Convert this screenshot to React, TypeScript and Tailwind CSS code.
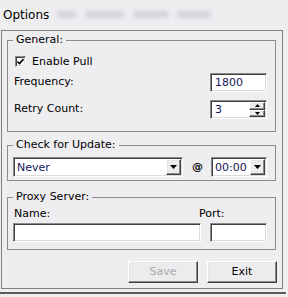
import { useState } from 'react'

const sunken =
  'border border-t-[#8a8a8a] border-l-[#8a8a8a] border-b-white border-r-white shadow-[inset_1px_1px_0_#404040,inset_-1px_-1px_0_#dcdcdc] bg-white'
const raised =
  'border border-t-white border-l-white border-b-[#404040] border-r-[#404040] shadow-[inset_-1px_-1px_0_#8a8a8a,inset_1px_1px_0_#e6e6e6] bg-[#ecebee]'

function DownArrow({ w = 7 }: { w?: number }) {
  const h = Math.ceil(w / 2)
  return (
    <svg width={w} height={h} viewBox={`0 0 ${w} ${h}`}>
      <polygon points={`0,0 ${w},0 ${w / 2},${h}`} fill="#000" />
    </svg>
  )
}

function UpArrow({ w = 5 }: { w?: number }) {
  const h = Math.ceil(w / 2)
  return (
    <svg width={w} height={h} viewBox={`0 0 ${w} ${h}`}>
      <polygon points={`0,${h} ${w},${h} ${w / 2},0`} fill="#000" />
    </svg>
  )
}

function Combo({ value, className }: { value: string; className: string }) {
  return (
    <div className={`${sunken} ${className} h-[20px] flex items-stretch p-[1px]`}>
      <span className="flex-1 min-w-0 overflow-hidden whitespace-nowrap pl-[2px] flex items-center text-[#14145a] leading-none">
        {value}
      </span>
      <button type="button" className={`${raised} w-[15px] shrink-0 flex items-center justify-center`}>
        <DownArrow />
      </button>
    </div>
  )
}

export default function App() {
  const [pull, setPull] = useState(true)

  return (
    <div className="w-[288px] h-[297px] bg-[#eeedf0] font-['DejaVu_Sans',sans-serif] text-[11px] text-black overflow-hidden">
      <div className="h-[30px] flex items-start pl-[3px] pt-[8px]">
        <span className="text-[12px] leading-[14px]">Options</span>
        {/* blurred window caption */}
        <div className="ml-[8px] flex gap-[8px] mt-[3px] blur-[2px]">
          <div className="w-[20px] h-[7px] rounded bg-[#d2d3dc]" />
          <div className="w-[40px] h-[7px] rounded bg-[#d2d3dc]" />
          <div className="w-[36px] h-[7px] rounded bg-[#d2d3dc]" />
          <div className="w-[34px] h-[7px] rounded bg-[#d2d3dc]" />
        </div>
      </div>

      <div className="ml-[1px] w-[282px] h-[259px] border border-[#7f7f7f] pl-[5px] pt-[2px] flex flex-col">
        <fieldset className="w-[269px] h-[99px] border border-[#8c8c8c] pl-[5px] pr-[8px]">
          <legend className="px-[3px] leading-[14px]">General:</legend>
          <label className="mt-[9px] ml-[2px] h-[11px] flex items-center gap-[6px] leading-none">
            <span
              className={`${sunken} w-[11px] h-[11px] flex items-center justify-center`}
              onClick={() => setPull(!pull)}
            >
              {pull ? (
                <svg width="7" height="7" viewBox="0 0 7 7">
                  <path d="M0.5 3.5 L2.5 5.5 L6.5 1" stroke="#000" strokeWidth="1.6" fill="none" />
                </svg>
              ) : null}
            </span>
            Enable Pull
          </label>
          <div className="mt-[6px] h-[19px] flex items-center justify-between">
            <span className="ml-[1px]">Frequency:</span>
            <input
              defaultValue="1800"
              className={`${sunken} w-[57px] h-[19px] pl-[4px] text-[11px] text-[#14145a] outline-none`}
            />
          </div>
          <div className="mt-[8px] h-[19px] flex items-center justify-between">
            <span className="ml-[1px]">Retry Count:</span>
            <div className={`${sunken} w-[57px] h-[19px] flex p-[1px]`}>
              <span className="flex-1 pl-[3px] flex items-center text-[#14145a] leading-none">3</span>
              <div className="w-[16px] flex flex-col">
                <button type="button" className={`${raised} flex-1 flex items-center justify-center`}>
                  <UpArrow />
                </button>
                <button type="button" className={`${raised} flex-1 flex items-center justify-center`}>
                  <DownArrow w={5} />
                </button>
              </div>
            </div>
          </div>
        </fieldset>

        <fieldset className="mt-[6px] w-[269px] h-[43px] border border-[#8c8c8c] pl-[5px] pr-[8px]">
          <legend className="px-[3px] leading-[14px]">Check for Update:</legend>
          <div className="mt-[5px] flex items-center">
            <Combo value="Never" className="w-[170px]" />
            <span className="ml-[9px] font-bold text-[#111]">@</span>
            <Combo value="00:00" className="ml-auto w-[56px]" />
          </div>
        </fieldset>

        <fieldset className="mt-[9px] w-[269px] h-[60px] border border-[#8c8c8c] pl-[5px] pr-[8px]">
          <legend className="px-[3px] leading-[14px]">Proxy Server:</legend>
          <div className="mt-[2px] h-[14px] flex items-center leading-none">
            <span className="ml-[1px] w-[185px]">Name:</span>
            <span>Port:</span>
          </div>
          <div className="mt-[3px] flex justify-between">
            <input className={`${sunken} w-[188px] h-[19px] outline-none`} />
            <input className={`${sunken} w-[57px] h-[19px] outline-none`} />
          </div>
        </fieldset>

        <div className="mt-[11px] flex justify-end gap-[9px] pr-[5px]">
          <button type="button" disabled className={`${raised} w-[70px] h-[22px] text-[#a8a8a8]`}>
            Save
          </button>
          <button type="button" className={`${raised} w-[70px] h-[22px] text-black`}>
            Exit
          </button>
        </div>
      </div>
      <div className="mt-[3px] h-[2px] w-[286px] bg-[#5a5a5a]" />
    </div>
  )
}
